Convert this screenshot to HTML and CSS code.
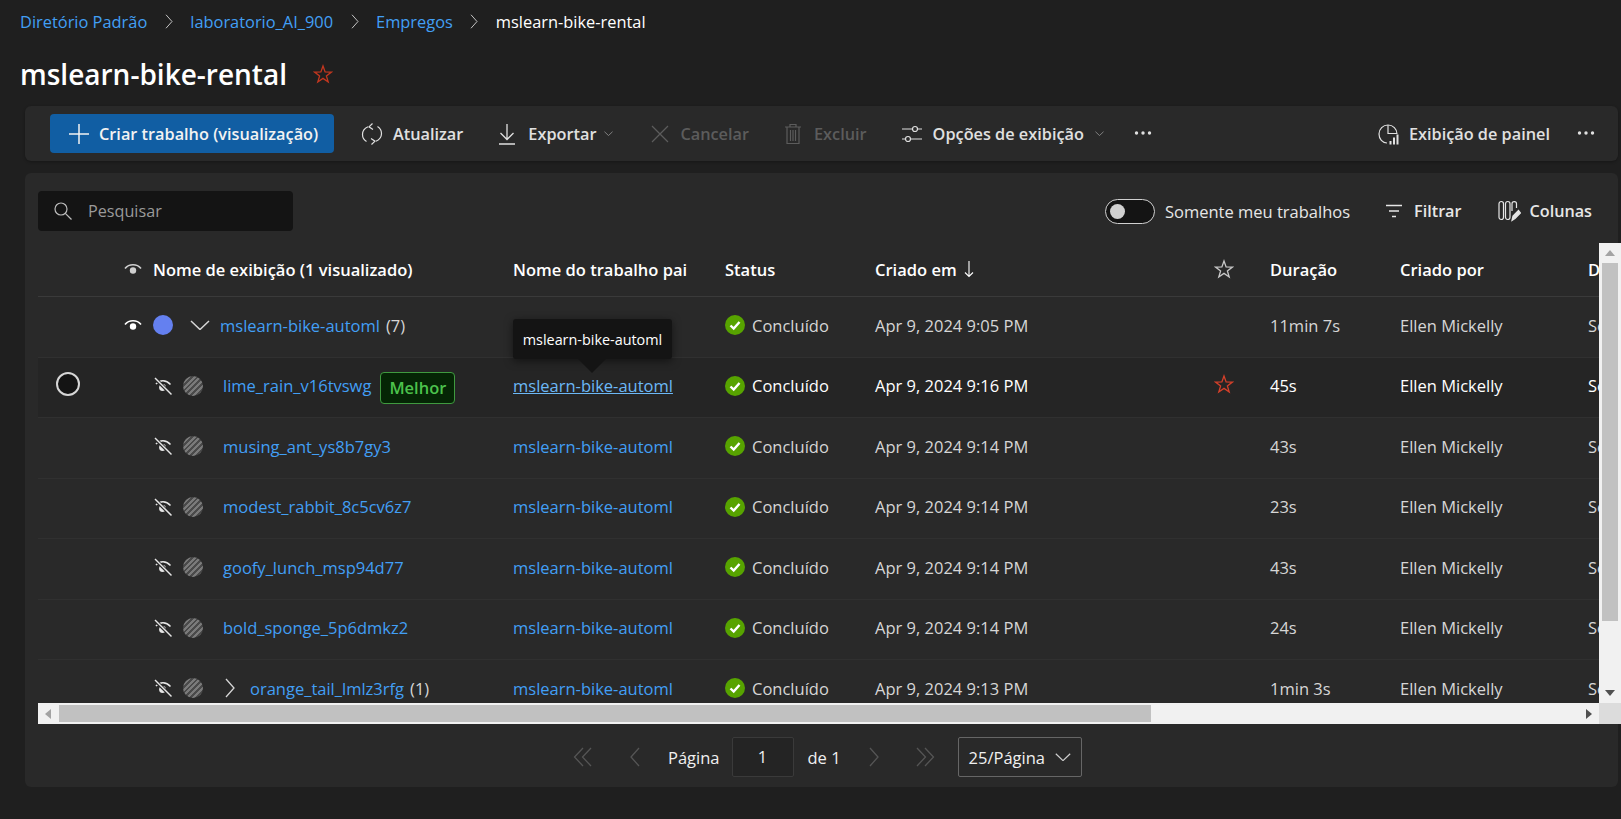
FILE: index.html
```html
<!DOCTYPE html>
<html lang="pt-BR">
<head>
    <meta charset="UTF-8">
    <title>mslearn-bike-rental</title>
    <link rel="stylesheet" href="styles.css">
</head>
<body>
    <!-- icones reutilizados -->
    <svg class="sprite" width="0" height="0">
        <symbol id="i-eye" viewBox="0 0 22 16"><path d="M3 7.5C7 2.5 15 2.5 19 7.5" fill="none" stroke="currentColor" stroke-width="1.6"/><circle cx="11" cy="9.5" r="3.2" fill="currentColor"/></symbol>
        <symbol id="i-eye-off" viewBox="0 0 22 22"><path d="M4 9C8 4.500 14 4.500 18.500 9.500" fill="none" stroke="currentColor" stroke-width="1.5"/><circle cx="10.500" cy="12.500" r="3.400" fill="currentColor"/><path d="M3 3.500L19.500 19.500" stroke="#292929" stroke-width="3.500"/><path d="M3 3L19.500 19.500" stroke="currentColor" stroke-width="1.500"/></symbol>
        <symbol id="i-check" viewBox="0 0 20 20"><circle cx="10" cy="10" r="10" fill="#57a300"/><path d="M5.500 10.500L8.700 13.600L14.500 7" fill="none" stroke="#fff" stroke-width="2.400"/></symbol>
        <symbol id="i-star" viewBox="0 0 20 20"><path d="M10 2L12.100 7.900L18.400 8.100L13.400 11.900L15.200 18L10 14.400L4.800 18L6.600 11.900L1.600 8.100L7.900 7.900Z" fill="none" stroke="currentColor" stroke-width="1.300"/></symbol>
        <symbol id="i-chev" viewBox="0 0 10 20"><path d="M1 1L9 10L1 19" fill="none" stroke="currentColor" stroke-width="1.300"/></symbol>
        <symbol id="i-chev-down" viewBox="0 0 20 10"><path d="M1 1L10 9.500L19 1" fill="none" stroke="currentColor" stroke-width="1.500"/></symbol>
        <symbol id="i-double" viewBox="0 0 20 20"><path d="M10 1L1.500 10L10 19M18 1L9.500 10L18 19" fill="none" stroke="currentColor" stroke-width="1.300"/></symbol>
        <symbol id="i-dots" viewBox="0 0 18 4"><circle cx="2.500" cy="2" r="1.700" fill="currentColor"/><circle cx="9" cy="2" r="1.700" fill="currentColor"/><circle cx="15.500" cy="2" r="1.700" fill="currentColor"/></symbol>
    </svg>

    <!-- caminho -->
    <nav class="breadcrumb">
        <a href="#">Diretório Padrão</a>
        <svg class="crumb-sep"><use href="#i-chev"/></svg>
        <a href="#">laboratorio_AI_900</a>
        <svg class="crumb-sep"><use href="#i-chev"/></svg>
        <a href="#">Empregos</a>
        <svg class="crumb-sep"><use href="#i-chev"/></svg>
        <span class="crumb-current">mslearn-bike-rental</span>
    </nav>

    <div class="page-title">
        <h1>mslearn-bike-rental</h1>
        <svg class="title-star"><use href="#i-star"/></svg>
    </div>

    <!-- barra de comandos -->
    <div class="toolbar">
        <button class="btn-primary">
            <svg width="22" height="22" viewBox="0 0 22 22"><path d="M11 1V21M1 11H21" stroke="currentColor" stroke-width="1.500"/></svg>
            Criar trabalho (visualização)
        </button>
        <button class="cmd cmd-refresh">
            <svg width="22" height="24" viewBox="0 0 22 24" fill="none" stroke="currentColor" stroke-width="1.200"><path d="M7 4.800C3.500 6.300 1.500 9 1.500 12.500C1.500 15.500 3 18 5.500 19.500"/><path d="M15 19.200C18.500 17.700 20.500 15 20.500 11.500C20.500 8.500 19 6 16.500 4.500"/><path d="M11.500 1.500L8 4.800L12 7.500"/><path d="M10.500 22.500L14 19.200L10 16.500"/></svg>
            Atualizar
        </button>
        <button class="cmd cmd-export">
            <svg width="18" height="22" viewBox="0 0 18 22" fill="none" stroke="currentColor" stroke-width="1.300"><path d="M9 1V16M2.500 10L9 16.500L15.500 10M1 21H17"/></svg>
            Exportar
            <svg class="caret"><use href="#i-chev-down"/></svg>
        </button>
        <button class="cmd cmd-cancel is-disabled">
            <svg width="18" height="18" viewBox="0 0 18 18"><path d="M1 1L17 17M17 1L1 17" stroke="currentColor" stroke-width="1.200"/></svg>
            Cancelar
        </button>
        <button class="cmd cmd-delete is-disabled">
            <svg width="16" height="22" viewBox="0 0 16 22" fill="none" stroke="currentColor" stroke-width="1.200"><path d="M0 4H16M5 4V1.500H11V4M2 4V20.500H14V4M5.500 7V18M8 7V18M10.500 7V18"/></svg>
            Excluir
        </button>
        <button class="cmd cmd-view">
            <svg width="22" height="18" viewBox="0 0 22 18" fill="none" stroke="currentColor" stroke-width="1.200"><path d="M1 4H11M17 4H21M1 14H4M10 14H21"/><circle cx="14" cy="4" r="2.500"/><circle cx="7" cy="14" r="2.500"/></svg>
            Opções de exibição
            <svg class="caret"><use href="#i-chev-down"/></svg>
        </button>
        <svg class="cmd-more"><use href="#i-dots"/></svg>
        <button class="cmd cmd-dash">
            <svg width="22" height="22" viewBox="0 0 22 22" fill="none" stroke="currentColor" stroke-width="1.200"><path d="M9 20C4.500 20 1 16 1 11C1 6 5 2 10 2C15 2 19 6 19 11"/><path d="M10 2V10.500H19"/><path d="M12.500 21.500V18M16 21.500V14.500M19.500 21.500V11.500" stroke-width="2"/></svg>
            Exibição de painel
        </button>
        <svg class="cmd-more cmd-more-last"><use href="#i-dots"/></svg>
    </div>

    <!-- lista de trabalhos -->
    <section class="jobs-card">
        <div class="filters">
            <div class="search">
                <svg width="18" height="18" viewBox="0 0 18 18" fill="none" stroke="#bdbdbd" stroke-width="1.200"><circle cx="7" cy="7" r="6"/><path d="M11.300 11.300L17.500 17.500"/></svg>
                <span>Pesquisar</span>
            </div>
            <div class="toggle"><i></i></div>
            <span class="toggle-label">Somente meu trabalhos</span>
            <span class="filter-item filter-item-filter">
                <svg width="18" height="14" viewBox="0 0 18 14" stroke="currentColor" stroke-width="1.300"><path d="M1 1.500H17M4 7H14M7 12.500H11"/></svg>
                Filtrar
            </span>
            <span class="filter-item filter-item-cols">
                <svg width="23" height="22" viewBox="0 0 23 22" fill="none" stroke="currentColor" stroke-width="1.200"><rect x="1" y="1.500" width="4.500" height="18" rx="2.200"/><rect x="7.500" y="1.500" width="4.500" height="18" rx="2.200"/><path d="M14 11V3.700C14 1 18.500 1 18.500 3.700V8"/><path d="M14 20.500L15 16L20.500 10.500L22.500 13L17 18.500Z" fill="currentColor"/></svg>
                Colunas
            </span>
        </div>

        <div class="table-frame">
            <div class="table-view">
                <div class="row row-head">
                    <div class="cell-name">
                        <svg class="eye"><use href="#i-eye"/></svg>
                        <span>Nome de exibição (1 visualizado)</span>
                    </div>
                    <div>Nome do trabalho pai</div>
                    <div>Status</div>
                    <div class="sorted">Criado em
                        <svg width="10" height="18" viewBox="0 0 10 18" fill="none" stroke="currentColor" stroke-width="1.100"><path d="M5 1V16.500M1 12.500L5 16.500L9 12.500"/></svg>
                    </div>
                    <div><svg class="star"><use href="#i-star"/></svg></div>
                    <div>Duração</div>
                    <div>Criado por</div>
                    <div>Destino de computação</div>
                </div>

                <div class="row">
                    <div class="cell-name">
                        <svg class="eye eye-on"><use href="#i-eye"/></svg>
                        <span class="dot dot-blue"></span>
                        <svg class="chev-down"><use href="#i-chev-down"/></svg>
                        <a href="#" class="job-parent">mslearn-bike-automl</a><span class="count">(7)</span>
                    </div>
                    <div></div>
                    <div class="status"><svg class="check"><use href="#i-check"/></svg>Concluído</div>
                    <div>Apr 9, 2024 9:05 PM</div>
                    <div></div>
                    <div>11min 7s</div>
                    <div>Ellen Mickelly</div>
                    <div>Serverless</div>
                </div>

                <div class="row row-hover">
                    <span class="radio"></span>
                    <div class="cell-name cell-child">
                        <svg class="eye-off"><use href="#i-eye-off"/></svg>
                        <span class="dot dot-stripe"></span>
                        <a href="#" class="job-child">lime_rain_v16tvswg</a>
                        <span class="badge">Melhor</span>
                    </div>
                    <div class="parent-cell">
                        <div class="tooltip">mslearn-bike-automl</div>
                        <a href="#" class="parent-hover">mslearn-bike-automl</a>
                    </div>
                    <div class="status"><svg class="check"><use href="#i-check"/></svg>Concluído</div>
                    <div>Apr 9, 2024 9:16 PM</div>
                    <div><svg class="star star-red"><use href="#i-star"/></svg></div>
                    <div>45s</div>
                    <div>Ellen Mickelly</div>
                    <div>Serverless</div>
                </div>

                <div class="row">
                    <div class="cell-name cell-child">
                        <svg class="eye-off"><use href="#i-eye-off"/></svg>
                        <span class="dot dot-stripe"></span>
                        <a href="#" class="job-child">musing_ant_ys8b7gy3</a>
                    </div>
                    <div><a href="#">mslearn-bike-automl</a></div>
                    <div class="status"><svg class="check"><use href="#i-check"/></svg>Concluído</div>
                    <div>Apr 9, 2024 9:14 PM</div>
                    <div></div>
                    <div>43s</div>
                    <div>Ellen Mickelly</div>
                    <div>Serverless</div>
                </div>

                <div class="row">
                    <div class="cell-name cell-child">
                        <svg class="eye-off"><use href="#i-eye-off"/></svg>
                        <span class="dot dot-stripe"></span>
                        <a href="#" class="job-child">modest_rabbit_8c5cv6z7</a>
                    </div>
                    <div><a href="#">mslearn-bike-automl</a></div>
                    <div class="status"><svg class="check"><use href="#i-check"/></svg>Concluído</div>
                    <div>Apr 9, 2024 9:14 PM</div>
                    <div></div>
                    <div>23s</div>
                    <div>Ellen Mickelly</div>
                    <div>Serverless</div>
                </div>

                <div class="row">
                    <div class="cell-name cell-child">
                        <svg class="eye-off"><use href="#i-eye-off"/></svg>
                        <span class="dot dot-stripe"></span>
                        <a href="#" class="job-child">goofy_lunch_msp94d77</a>
                    </div>
                    <div><a href="#">mslearn-bike-automl</a></div>
                    <div class="status"><svg class="check"><use href="#i-check"/></svg>Concluído</div>
                    <div>Apr 9, 2024 9:14 PM</div>
                    <div></div>
                    <div>43s</div>
                    <div>Ellen Mickelly</div>
                    <div>Serverless</div>
                </div>

                <div class="row">
                    <div class="cell-name cell-child">
                        <svg class="eye-off"><use href="#i-eye-off"/></svg>
                        <span class="dot dot-stripe"></span>
                        <a href="#" class="job-child">bold_sponge_5p6dmkz2</a>
                    </div>
                    <div><a href="#">mslearn-bike-automl</a></div>
                    <div class="status"><svg class="check"><use href="#i-check"/></svg>Concluído</div>
                    <div>Apr 9, 2024 9:14 PM</div>
                    <div></div>
                    <div>24s</div>
                    <div>Ellen Mickelly</div>
                    <div>Serverless</div>
                </div>

                <div class="row">
                    <div class="cell-name cell-child">
                        <svg class="eye-off"><use href="#i-eye-off"/></svg>
                        <span class="dot dot-stripe"></span>
                        <svg class="chev-right"><use href="#i-chev"/></svg>
                        <a href="#" class="job-nested">orange_tail_lmlz3rfg</a><span class="count">(1)</span>
                    </div>
                    <div><a href="#">mslearn-bike-automl</a></div>
                    <div class="status"><svg class="check"><use href="#i-check"/></svg>Concluído</div>
                    <div>Apr 9, 2024 9:13 PM</div>
                    <div></div>
                    <div>1min 3s</div>
                    <div>Ellen Mickelly</div>
                    <div>Serverless</div>
                </div>
            </div>

            <!-- barras de rolagem -->
            <div class="vscroll">
                <span class="arrow arrow-up"></span>
                <span class="vthumb"></span>
                <span class="arrow arrow-down"></span>
            </div>
            <div class="hscroll">
                <span class="arrow arrow-left"></span>
                <span class="hthumb"></span>
                <span class="arrow arrow-right"></span>
            </div>
            <div class="corner"></div>
        </div>

        <!-- paginacao -->
        <div class="pager">
            <svg class="pg-double"><use href="#i-double"/></svg>
            <svg class="pg-chev pg-prev pg-flip"><use href="#i-chev"/></svg>
            <span>Página</span>
            <span class="page-input">1</span>
            <span>de 1</span>
            <svg class="pg-chev pg-next"><use href="#i-chev"/></svg>
            <svg class="pg-double pg-flip"><use href="#i-double"/></svg>
            <span class="page-size">25/Página<svg class="page-caret"><use href="#i-chev-down"/></svg></span>
        </div>
    </section>
</body>
</html>
```

FILE: styles.css
```css
* {
    box-sizing: border-box;
}
html, body {
    height: 100%;
    overflow: hidden;
}
body {
    margin: 0;
    background-color: #1f1f1f;
    color: #fff;
    font-family: "Open Sans", "Noto Sans", sans-serif;
    font-size: 16.5px;
}
a {
    color: #429ff5;
    text-decoration: none;
}
button {
    font: inherit;
    background: none;
    border: none;
    color: inherit;
    padding: 0;
}
.sprite {
    display: block;
}

/* caminho */
.breadcrumb {
    display: flex;
    align-items: center;
    height: 42px;
    padding-left: 20px;
    font-size: 16.4px;
}
.crumb-sep {
    width: 8px;
    height: 15px;
    margin: 0 17.5px;
    color: #c8c8c8;
}
.crumb-current {
    color: #fff;
}
.page-title {
    display: flex;
    align-items: center;
    height: 64px;
    padding-left: 20px;
}
.page-title h1 {
    margin: 0;
    font-size: 28px;
    font-weight: 600;
}
.title-star {
    width: 20px;
    height: 20px;
    margin-left: 26px;
    color: #c4371f;
}

/* barra de comandos */
.toolbar {
    display: flex;
    align-items: center;
    height: 55px;
    margin: 0 3px 12px 25px;
    padding-left: 25px;
    background-color: #292929;
    border-radius: 6px;
    box-shadow: 0 1px 3px rgba(0, 0, 0, 0.3);
    font-size: 16.3px;
    font-weight: 600;
    color: #e0e0e0;
}
.btn-primary {
    display: flex;
    align-items: center;
    gap: 9px;
    width: 284px;
    height: 39px;
    padding-left: 18px;
    background-color: #115ea3;
    border-radius: 4px;
    color: #f2f2f2;
    flex: none;
}
.cmd {
    display: flex;
    align-items: center;
    gap: 10px;
    flex: none;
}
.is-disabled {
    color: #5c5c5c;
}
.caret {
    width: 9px;
    height: 5px;
    color: #a8a8a8;
}
.cmd-refresh { margin-left: 27px; }
.cmd-export {
    margin-left: 35px;
    gap: 12px;
}
.cmd-export .caret { margin-left: -4px; }
.cmd-cancel {
    margin-left: 38px;
    gap: 11px;
}
.cmd-delete {
    margin-left: 36px;
    gap: 13px;
}
.cmd-view {
    margin-left: 34px;
    gap: 10px;
}
.cmd-view .caret { margin-left: 1px; }
.cmd-more {
    width: 18px;
    height: 4px;
    margin-left: 30px;
    margin-bottom: 2px;
    color: #e0e0e0;
    flex: none;
}
.cmd-dash {
    margin-left: auto;
    gap: 9px;
}
.cmd-more-last {
    margin-left: 27px;
    margin-right: 23px;
}

/* lista de trabalhos */
.jobs-card {
    margin: 0 3px 0 25px;
    height: 614px;
    background-color: #292929;
    border-radius: 6px;
    display: flex;
    flex-direction: column;
}
.filters {
    display: flex;
    align-items: center;
    height: 70px;
    padding: 6px 26px 0 13px;
    color: #e6e6e6;
    flex: none;
}
.search {
    display: flex;
    align-items: center;
    gap: 16px;
    width: 255px;
    height: 40px;
    padding-left: 16px;
    background-color: #141414;
    border-radius: 4px;
    color: #9a9a9a;
    font-size: 16.2px;
}
.toggle {
    width: 50px;
    height: 25px;
    margin-left: auto;
    padding-left: 4px;
    display: flex;
    align-items: center;
    background-color: #141414;
    border: 1px solid #d0d0d0;
    border-radius: 13px;
}
.toggle i {
    display: block;
    width: 15px;
    height: 15px;
    background-color: #d0d0d0;
    border-radius: 50%;
}
.toggle-label {
    margin-left: 10px;
}
.filter-item {
    display: flex;
    align-items: center;
    font-size: 16.2px;
    font-weight: 600;
}
.filter-item svg {
    flex: none;
}
.filter-item-filter {
    gap: 11px;
    margin-left: 35px;
}
.filter-item-cols {
    gap: 9px;
    margin-left: 36px;
}

/* tabela */
.table-frame {
    display: grid;
    grid-template-columns: 1561px 22px;
    grid-template-rows: 460px 21px;
    margin-left: 13px;
    margin-right: -2px;
    flex: none;
}
.table-view {
    overflow: hidden;
    color: #d6d6d6;
}
.row {
    position: relative;
    display: grid;
    grid-template-columns: 475px 212px 150px 329px 66px 130px 188px 300px;
    align-items: center;
    height: 60.5px;
    border-bottom: 1px solid #303030;
    width: 1850px;
}
.row > div {
    display: flex;
    align-items: center;
    white-space: nowrap;
    padding-bottom: 3px;
}
.row-head {
    height: 54px;
    color: #fff;
    font-weight: 600;
    border-bottom-color: #3a3a3a;
}
.row > .cell-name {
    padding-left: 84px;
}
.row-head > div {
    padding-bottom: 1px;
}
.row-hover {
    background-color: #252525;
    color: #fff;
}
.eye {
    width: 22px;
    height: 16px;
    margin-right: 9px;
    color: #d0d0d0;
}
.eye-on {
    color: #fff;
}
.row > .cell-child {
    padding-left: 114px;
}
.eye-off {
    width: 22px;
    height: 22px;
    margin-right: 9px;
    color: #e6e6e6;
    flex: none;
}
.dot {
    display: block;
    width: 20px;
    height: 20px;
    border-radius: 50%;
    flex: none;
}
.dot-blue {
    background-color: #6480f0;
}
.dot-stripe {
    background: repeating-linear-gradient(135deg, #7a7a7a 0, #7a7a7a 2px, #4a4a4a 2px, #4a4a4a 4px);
}
.chev-down {
    width: 20px;
    height: 10px;
    margin: 0 10px 0 17px;
    color: #d6d6d6;
    flex: none;
}
.chev-right {
    width: 12px;
    height: 20px;
    margin: 0 14px 0 21px;
    color: #d6d6d6;
    flex: none;
}
.count {
    margin-left: 6px;
}
.job-child {
    margin-left: 20px;
}
.badge {
    display: block;
    margin: 4px 0 0 9px;
    padding: 0 8px;
    height: 32px;
    line-height: 30px;
    background-color: #052505;
    border: 1px solid #3f9a3f;
    border-radius: 4px;
    color: #4cc24c;
    font-weight: 600;
}
.radio {
    position: absolute;
    left: 18px;
    top: 14px;
    width: 24px;
    height: 24px;
    background-color: #141414;
    border: 2px solid #d6d6d6;
    border-radius: 50%;
}
.parent-cell {
    position: relative;
}
.parent-hover {
    color: #6cb8f6;
    text-decoration: underline;
}
.tooltip {
    position: absolute;
    left: 0;
    top: -55px;
    width: 159px;
    height: 40px;
    z-index: 2;
    display: flex;
    align-items: center;
    justify-content: center;
    background-color: #141414;
    border-radius: 3px;
    box-shadow: 0 2px 8px rgba(0, 0, 0, 0.5);
    color: #fff;
    font-size: 14.4px;
}
.tooltip::after {
    content: "";
    position: absolute;
    left: 65px;
    top: 40px;
    border-left: 14px solid transparent;
    border-right: 14px solid transparent;
    border-top: 14px solid #141414;
}
.check {
    width: 20px;
    height: 20px;
    margin-right: 7px;
    flex: none;
}
.sorted {
    gap: 7px;
}
.star {
    width: 20px;
    height: 20px;
    margin-left: 10px;
    color: #c8c8c8;
}
.star-red {
    color: #d5402a;
    margin-bottom: 3px;
}

/* barras de rolagem */
.vscroll {
    display: flex;
    flex-direction: column;
    align-items: center;
    background-color: #f1f1f1;
    padding-top: 7px;
    padding-bottom: 7px;
}
.vthumb {
    display: block;
    width: 16px;
    height: 358px;
    margin-top: 7px;
    background-color: #c1c1c1;
}
.arrow {
    display: block;
    width: 0;
    height: 0;
    border: 5px solid transparent;
    flex: none;
}
.arrow-up {
    border-top: none;
    border-bottom: 6px solid #a3a3a3;
}
.arrow-down {
    margin-top: auto;
    border-bottom: none;
    border-top: 6px solid #505050;
}
.hscroll {
    display: flex;
    align-items: center;
    background-color: #f1f1f1;
    padding: 0 7px;
}
.arrow-left {
    border-left: none;
    border-right: 6px solid #a3a3a3;
}
.arrow-right {
    margin-left: auto;
    border-right: none;
    border-left: 6px solid #505050;
}
.hthumb {
    display: block;
    width: 1092px;
    height: 17px;
    margin-left: 8px;
    background-color: #c1c1c1;
}
.corner {
    background-color: #dcdcdc;
}

/* paginacao */
.pager {
    display: flex;
    align-items: center;
    height: 66px;
    padding-left: 548px;
    color: #f0f0f0;
    flex: none;
}
.pg-double {
    width: 20px;
    height: 20px;
    color: #555;
}
.pg-chev {
    width: 10px;
    height: 20px;
    color: #555;
}
.pg-prev {
    margin: 0 28px 0 37px;
}
.pg-next {
    margin: 0 36px 0 28px;
}
.pg-flip {
    transform: scaleX(-1);
}
.page-input {
    display: block;
    width: 62px;
    height: 40px;
    line-height: 38px;
    margin: 0 14px 0 12px;
    text-align: center;
    border: 1px solid #3a3a3a;
    border-radius: 2px;
    background-color: #242424;
}
.page-size {
    display: flex;
    align-items: center;
    width: 124px;
    height: 40px;
    margin-left: 23px;
    padding-left: 10px;
    border: 1px solid #666;
    border-radius: 2px;
}
.page-caret {
    width: 16px;
    height: 8px;
    margin-left: 10px;
    color: #d0d0d0;
    flex: none;
}
```
